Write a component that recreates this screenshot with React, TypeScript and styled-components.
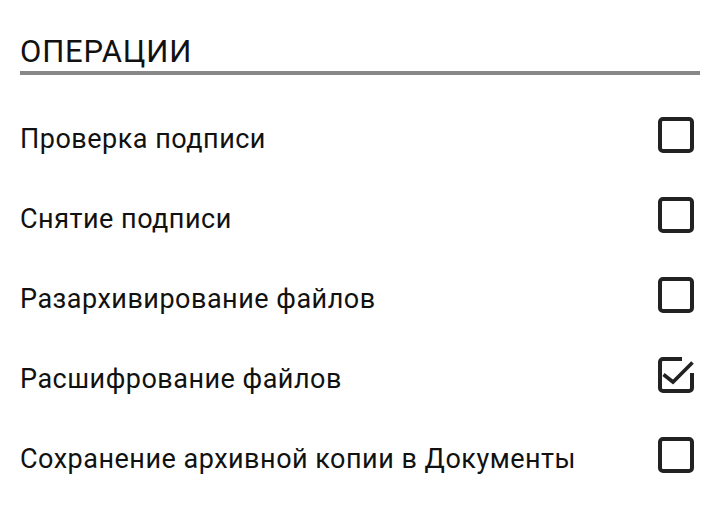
import styled, { createGlobalStyle } from "styled-components";

const GlobalStyle = createGlobalStyle`
    body {
        margin: 0;
        background: #fff;
        font-family: Roboto, "Noto Sans", sans-serif;
        color: #111;
    }
`;

const Page = styled.div`
    padding: 0 20px;
`;

const Title = styled.div`
    font-size: 31px;
    line-height: 36px;
    letter-spacing: 0.8px;
    padding-top: 34px;
    padding-bottom: 1px;
    border-bottom: 4px solid #888;
`;

const List = styled.div`
    display: flex;
    flex-direction: column;
    padding-top: 20px;
`;

const Row = styled.label`
    display: flex;
    align-items: center;
    justify-content: space-between;
    height: 80px;
    padding-right: 6px;
    cursor: pointer;
`;

const Label = styled.span`
    font-size: 27px;
    line-height: 30px;
    letter-spacing: 0.5px;
    padding-top: 8px;
`;

const Box = styled.svg`
    width: 36px;
    height: 36px;
    flex-shrink: 0;
    color: #222;
`;

const CheckIcon = ({ checked }: { checked: boolean }) => (
    <Box viewBox="0 0 36 36" fill="none" stroke="currentColor" strokeWidth={4}>
        {checked ? (
            <>
                <path d="M24 2H5a3 3 0 0 0-3 3v26a3 3 0 0 0 3 3h26a3 3 0 0 0 3-3V16" />
                <path d="M5.5 17.5L15 25L34.5 5.5" strokeWidth={3.6} />
            </>
        ) : (
            <rect x="2" y="2" width="32" height="32" rx="3" />
        )}
    </Box>
);

const operations = [
    { title: "Проверка подписи", checked: false },
    { title: "Снятие подписи", checked: false },
    { title: "Разархивирование файлов", checked: false },
    { title: "Расшифрование файлов", checked: true },
    { title: "Сохранение архивной копии в Документы", checked: false },
];

const App = () => {
    return (
        <Page>
            <GlobalStyle />
            <Title>ОПЕРАЦИИ</Title>
            <List>
                {operations.map((op) => (
                    <Row key={op.title}>
                        <Label>{op.title}</Label>
                        <CheckIcon checked={op.checked} />
                    </Row>
                ))}
            </List>
        </Page>
    );
};

export default App;
